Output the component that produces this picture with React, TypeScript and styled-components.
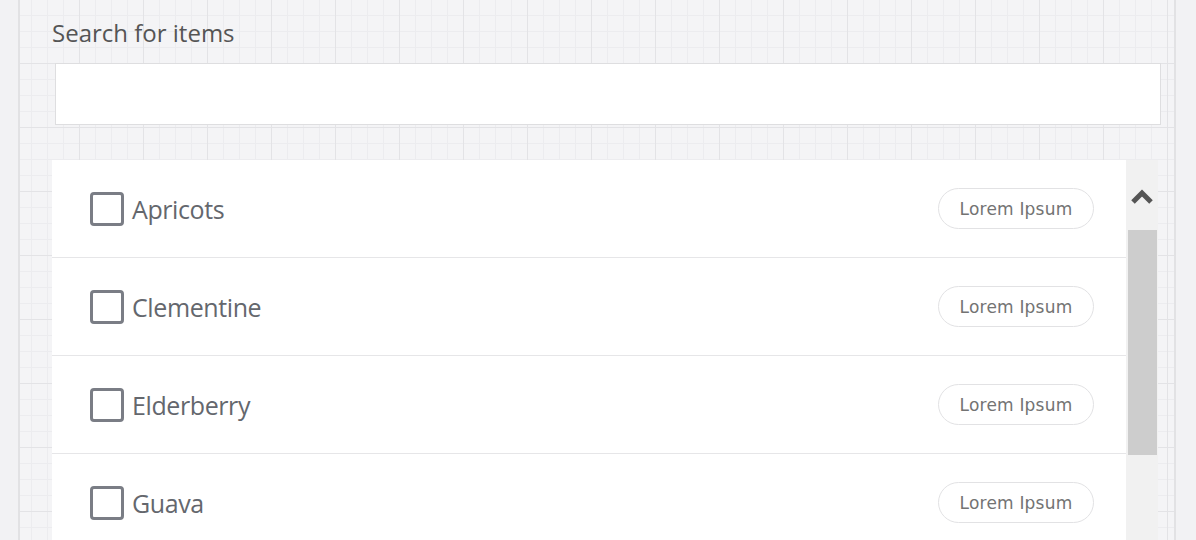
import React from 'react';
import styled, { createGlobalStyle } from 'styled-components';

const GlobalStyle = createGlobalStyle`
  html, body {
    margin: 0;
    padding: 0;
    background: #f2f2f4;
    font-family: "Open Sans", "Noto Sans", sans-serif;
  }
`;

const Page = styled.div`
  width: 1196px;
  height: 540px;
  overflow: hidden;
  display: flex;
  background: #f2f2f4;
`;

const Canvas = styled.main`
  margin-left: 18px;
  width: 1158px;
  height: 540px;
  border-left: 2px solid #e2e2e4;
  border-right: 2px solid #e2e2e4;
  background-color: #f4f4f6;
  background-image:
    linear-gradient(to right, #e3e3e6 1px, transparent 1px),
    linear-gradient(to bottom, #e3e3e6 1px, transparent 1px),
    linear-gradient(to right, #ececef 1px, transparent 1px),
    linear-gradient(to bottom, #ececef 1px, transparent 1px);
  background-size: 64px 64px, 64px 64px, 16px 16px, 16px 16px;
  background-position: 59px 63px, 59px 63px, 11px 15px, 11px 15px;
  padding: 17px 0 0 32px;
  box-sizing: border-box;
  display: flex;
  flex-direction: column;
  overflow: hidden;
`;

const Label = styled.label`
  font-size: 24px;
  line-height: 32px;
  color: #555;
  letter-spacing: 0;
  flex-shrink: 0;
`;

const SearchInput = styled.input`
  margin: 14px 0 0 3px;
  width: 1106px;
  height: 62px;
  flex-shrink: 0;
  box-sizing: border-box;
  border: 1px solid #dedee0;
  background: #fff;
  outline: none;
`;

const ListBox = styled.div`
  margin-top: 35px;
  width: 1106px;
  display: flex;
  flex-shrink: 0;
`;

const Rows = styled.ul`
  list-style: none;
  margin: 0;
  padding: 0;
  flex: 1;
  background: #fff;
`;

const Row = styled.li`
  height: 97px;
  border-bottom: 1px solid #e6e6e8;
  display: flex;
  align-items: center;
  padding: 0 32px 0 38px;
`;

const Check = styled.span`
  width: 34px;
  height: 34px;
  box-sizing: border-box;
  border: 3px solid #7a7d85;
  border-radius: 4px;
  flex-shrink: 0;
`;

const ItemName = styled.span`
  margin-left: 8px;
  font-size: 25px;
  color: #64676d;
  letter-spacing: -0.4px;
  flex: 1;
`;

const Tag = styled.span`
  width: 156px;
  height: 41px;
  box-sizing: border-box;
  border: 1px solid #e2e2e4;
  border-radius: 21px;
  display: flex;
  align-items: center;
  justify-content: center;
  font-family: "DejaVu Sans", "Open Sans", sans-serif;
  font-size: 17px;
  letter-spacing: 0.2px;
  color: #737373;
`;

const Scrollbar = styled.div`
  width: 32px;
  background: #f1f1f1;
  display: flex;
  flex-direction: column;
  align-items: center;
`;

const Arrow = styled.div`
  height: 70px;
  display: flex;
  align-items: center;
  justify-content: center;
  padding-top: 2px;
  box-sizing: border-box;
`;

const Thumb = styled.div`
  width: 29px;
  height: 225px;
  background: #cdcdcd;
`;

const items = ['Apricots', 'Clementine', 'Elderberry', 'Guava'];

export default function App() {
  return (
    <Page>
      <GlobalStyle />
      <Canvas>
        <Label>Search for items</Label>
        <SearchInput aria-label="Search for items" />
        <ListBox>
          <Rows>
            {items.map((item) => (
              <Row key={item}>
                <Check />
                <ItemName>{item}</ItemName>
                <Tag>Lorem Ipsum</Tag>
              </Row>
            ))}
          </Rows>
          <Scrollbar>
            <Arrow>
              <svg width="24" height="18" viewBox="0 0 24 18">
                <polyline
                  points="3,15 12,6 21,15"
                  fill="none"
                  stroke="#555"
                  strokeWidth="5"
                />
              </svg>
            </Arrow>
            <Thumb />
          </Scrollbar>
        </ListBox>
      </Canvas>
    </Page>
  );
}
